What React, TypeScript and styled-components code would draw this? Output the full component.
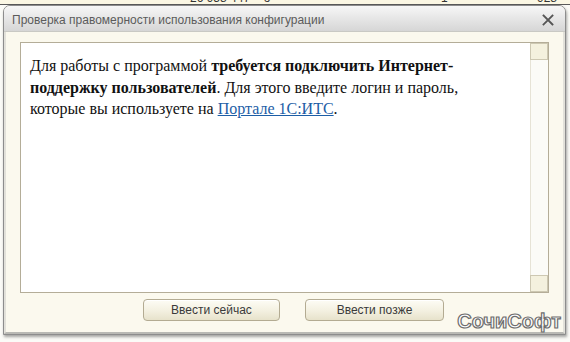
import React from "react";
import styled, { createGlobalStyle } from "styled-components";

const Global = createGlobalStyle`
  html, body { margin: 0; padding: 0; }
  body { width: 570px; height: 342px; overflow: hidden; background: #fdfcf6; }
`;

const Page = styled.div`
  position: relative;
  width: 570px;
  height: 342px;
  overflow: hidden;
  background: #fbfbf7;
  font-family: "Liberation Sans", Arial, sans-serif;
`;

const TopStrip = styled.div`
  height: 4px;
  background: #fbf7e4;
  border-bottom: 1px solid #5a5a5a;
  position: relative;
  overflow: hidden;
`;

const BackText = styled.span<{ $left: number }>`
  position: absolute;
  top: -9px;
  left: ${(p) => p.$left}px;
  font-size: 12px;
  color: #333;
  font-family: "Liberation Sans", Arial, sans-serif;
  white-space: nowrap;
`;

const Stage = styled.div`
  padding: 0 4px 0 3px;
`;

const Window = styled.div`
  position: relative;
  height: 328px;
  display: flex;
  flex-direction: column;
  border: 1px solid #8d8d8d;
  border-radius: 7px 7px 0 0;
  background: #fbf9ee;
  box-shadow: 1px 2px 3px rgba(0, 0, 0, 0.35);
  overflow: hidden;
`;

const TitleBar = styled.div`
  height: 25px;
  flex: none;
  display: flex;
  align-items: center;
  justify-content: space-between;
  padding: 0 11px 0 8px;
  background: linear-gradient(#f7f7f7, #e6e6e6 50%, #d6d6d6);
  border-bottom: 1px solid #c9c9c4;
`;

const Title = styled.span`
  font-size: 12px;
  color: #5b5b5b;
  padding-top: 2px;
`;

const Close = styled.svg`
  width: 12px;
  height: 12px;
  margin-top: 2px;
`;

const Body = styled.div`
  flex: 1;
  display: flex;
  flex-direction: column;
  padding: 10px 14px 0 14px;
  border-left: 2px solid #e2e1da;
  border-right: 2px solid #e2e1da;
  border-bottom: 2px solid #b9b9b4;
`;

const Panel = styled.div`
  height: 249px;
  display: flex;
  background: #ffffff;
  border: 1px solid #b4ad98;
`;

const Content = styled.div`
  flex: 1;
  padding: 12px 0 0 9px;
  font-family: "Liberation Serif", "Times New Roman", serif;
  font-size: 16px;
  line-height: 21.5px;
  color: #111;
`;

const Link = styled.a`
  color: #1d5ea6;
  text-decoration: underline;
`;

const ScrollBar = styled.div`
  width: 17px;
  display: flex;
  flex-direction: column;
  justify-content: space-between;
  border-left: 1px solid #e6e3d6;
  background: #fbfbf7;
`;

const ScrollBox = styled.div`
  height: 17px;
  background: #f4f1de;
  border: 1px solid #cdc8b2;
  margin-left: -1px;
  box-sizing: border-box;
  width: 18px;
`;

const Buttons = styled.div`
  display: flex;
  gap: 25px;
  padding: 6px 0 0 123px;
`;

const Button = styled.button<{ $w: number }>`
  width: ${(p) => p.$w}px;
  height: 22px;
  border: 1px solid #b3ab92;
  border-radius: 4px;
  background: linear-gradient(#fdfcf5, #f3f0e0 55%, #e7e2cb);
  font-family: "Liberation Sans", Arial, sans-serif;
  font-size: 12px;
  color: #3a3a3a;
  padding: 0;
  box-shadow: inset 0 1px 0 #ffffff;
`;

const Watermark = styled.span`
  position: absolute;
  right: 4px;
  bottom: 1px;
  font-family: "Liberation Sans", Arial, sans-serif;
  font-weight: bold;
  font-size: 20px;
  color: #ffffff;
  -webkit-text-stroke: 1.2px #6e6e6e;
`;

export default function App() {
  return (
    <>
      <Global />
      <Page>
        <TopStrip>
          <BackText $left={190}>26 958 447 &nbsp;&nbsp; б</BackText>
          <BackText $left={441}>1</BackText>
          <BackText $left={537}>928</BackText>
        </TopStrip>
        <Stage>
          <Window>
            <TitleBar>
              <Title>Проверка правомерности использования конфигурации</Title>
              <Close viewBox="0 0 12 12">
                <path d="M1.5 1.5 L10.5 10.5 M10.5 1.5 L1.5 10.5" stroke="#555" strokeWidth="1.8" strokeLinecap="square" />
              </Close>
            </TitleBar>
            <Body>
              <Panel>
                <Content>
                  Для работы с программой <b>требуется подключить Интернет-поддержку пользователей</b>. Для этого введите логин и пароль,
                  <br />
                  которые вы используете на <Link href="#">Портале 1С:ИТС</Link>.
                </Content>
                <ScrollBar>
                  <ScrollBox />
                  <ScrollBox />
                </ScrollBar>
              </Panel>
              <Buttons>
                <Button $w={137}>Ввести сейчас</Button>
                <Button $w={139}>Ввести позже</Button>
              </Buttons>
            </Body>
            <Watermark>СочиСофт</Watermark>
          </Window>
        </Stage>
      </Page>
    </>
  );
}
